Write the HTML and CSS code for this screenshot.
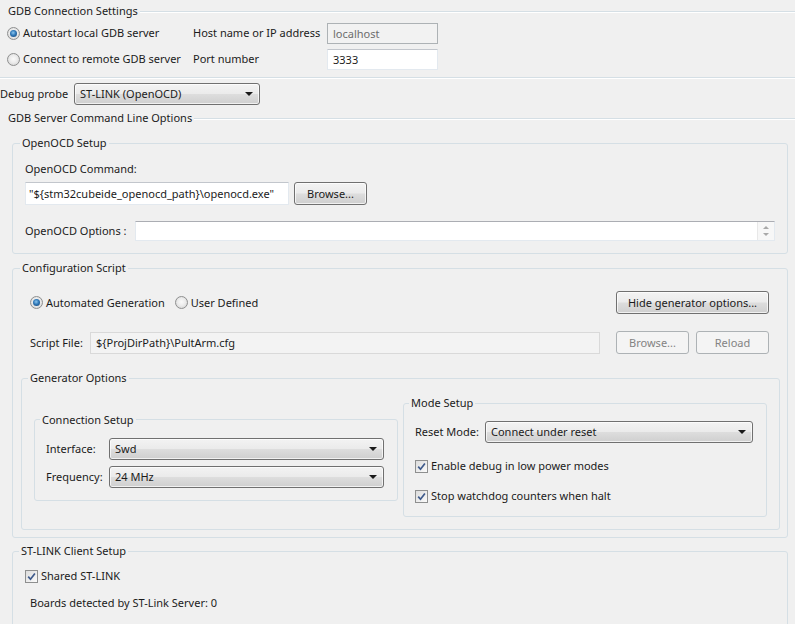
FILE: index.html
```html
<!DOCTYPE html>
<html lang="en">
<head>
    <meta charset="UTF-8">
    <title>Debugger</title>
    <link rel="stylesheet" href="styles.css">
</head>
<body>
    <div class="page">

        <!-- GDB connection -->
        <div class="section-head"><span>GDB Connection Settings</span></div>
        <div class="gdb-connection">
            <div class="conn-grid">
                <label class="opt"><span class="radio checked"></span>Autostart local GDB server</label>
                <span>Host name or IP address</span>
                <span class="field disabled">localhost</span>
                <label class="opt"><span class="radio"></span>Connect to remote GDB server</label>
                <span>Port number</span>
                <span class="field">3333</span>
            </div>
        </div>

        <div class="probe-row">
            <span class="probe-label">Debug probe</span>
            <span class="combo probe">ST-LINK (OpenOCD)</span>
        </div>

        <!-- GDB server options -->
        <div class="section-head server-head"><span>GDB Server Command Line Options</span></div>
        <div class="server-options">

            <fieldset class="group openocd">
                <legend>OpenOCD Setup</legend>
                <div>OpenOCD Command:</div>
                <div class="cmd-row">
                    <span class="field cmd">"${stm32cubeide_openocd_path}\openocd.exe"</span>
                    <span class="btn">Browse...</span>
                </div>
                <div class="opts-row">
                    <span class="opts-label">OpenOCD Options :</span>
                    <span class="field multi">
                        <span class="scroll"><i class="up"></i><i class="down"></i></span>
                    </span>
                </div>
            </fieldset>

            <fieldset class="group config">
                <legend>Configuration Script</legend>
                <div class="mode-row">
                    <label class="opt"><span class="radio checked"></span>Automated Generation</label>
                    <label class="opt second"><span class="radio"></span>User Defined</label>
                    <span class="btn hide-btn">Hide generator options...</span>
                </div>
                <div class="script-row">
                    <span class="script-label">Script File:</span>
                    <span class="field readonly script">${ProjDirPath}\PultArm.cfg</span>
                    <span class="btn disabled">Browse...</span>
                    <span class="btn disabled">Reload</span>
                </div>

                <fieldset class="group generator">
                    <legend>Generator Options</legend>
                    <div class="gen-row">
                        <fieldset class="group connection">
                            <legend>Connection Setup</legend>
                            <div class="setup-grid conn-cols">
                                <span>Interface:</span>
                                <span class="combo">Swd</span>
                                <span>Frequency:</span>
                                <span class="combo">24 MHz</span>
                            </div>
                        </fieldset>
                        <fieldset class="group mode">
                            <legend>Mode Setup</legend>
                            <div class="setup-grid mode-cols">
                                <span>Reset Mode:</span>
                                <span class="combo">Connect under reset</span>
                            </div>
                            <label class="check-row">
                                <span class="check"><svg viewBox="0 0 11 11" width="11" height="11"><path d="M2.2 5.6l2.3 2.6L8.9 2.4" fill="none" stroke="#3f5b8c" stroke-width="1.7"/></svg></span>
                                Enable debug in low power modes
                            </label>
                            <label class="check-row">
                                <span class="check"><svg viewBox="0 0 11 11" width="11" height="11"><path d="M2.2 5.6l2.3 2.6L8.9 2.4" fill="none" stroke="#3f5b8c" stroke-width="1.7"/></svg></span>
                                Stop watchdog counters when halt
                            </label>
                        </fieldset>
                    </div>
                </fieldset>
            </fieldset>

            <fieldset class="group stlink">
                <legend>ST-LINK Client Setup</legend>
                <label class="check-row first">
                    <span class="check"><svg viewBox="0 0 11 11" width="11" height="11"><path d="M2.2 5.6l2.3 2.6L8.9 2.4" fill="none" stroke="#3f5b8c" stroke-width="1.7"/></svg></span>
                    Shared ST-LINK
                </label>
                <div class="boards">Boards detected by ST-Link Server: 0</div>
            </fieldset>

        </div>
    </div>
</body>
</html>
```

FILE: styles.css
```css
body {
    margin: 0;
    background: #f0f0f0;
    font-family: "Noto Sans", "Segoe UI", Arial, sans-serif;
    font-size: 11px;
    line-height: 16px;
    color: #1b1b1b;
    overflow: hidden;
}

.page {
    width: 795px;
}

/* titles with a line running to the right */
.section-head {
    display: flex;
    align-items: center;
    height: 16px;
    margin-top: 3px;
    padding-left: 6px;
}

.section-head span {
    padding: 0 2px;
}

.section-head::after {
    content: "";
    flex: 1;
    margin-top: 2px;
    border-top: 1px solid #d5dfe5;
    border-bottom: 1px solid #fff;
}

.server-head {
    margin-top: 5px;
}

.gdb-connection {
    padding: 3px 0 7px 7px;
    border-bottom: 1px solid #d5dfe5;
    box-shadow: 0 1px 0 #fff;
}

.conn-grid {
    display: grid;
    grid-template-columns: 186px 134px 111px;
    grid-auto-rows: 22px;
    row-gap: 4px;
    align-items: center;
}

/* controls */
.opt {
    display: flex;
    align-items: center;
}

.radio {
    position: relative;
    flex: none;
    width: 13px;
    height: 13px;
    box-sizing: border-box;
    margin-right: 3px;
    border: 1px solid #8e8f8f;
    border-radius: 50%;
    background: radial-gradient(circle at 50% 45%, #fafafa 0, #ececec 45%, #cdcdcd 100%);
}

.radio.checked::after {
    content: "";
    position: absolute;
    left: 2px;
    top: 2px;
    width: 7px;
    height: 7px;
    border-radius: 50%;
    background: radial-gradient(circle at 45% 40%, #8cc6ee 0, #2f78b8 45%, #173f6a 100%);
}

.field {
    display: block;
    height: 21px;
    box-sizing: border-box;
    padding: 0 5px;
    line-height: 19px;
    background: #fff;
    border: 1px solid #e3e9ef;
    border-top-color: #c2c6cc;
    white-space: nowrap;
    overflow: hidden;
}

.field.disabled {
    background: #f2f2f2;
    border-color: #adb2b5;
    color: #6d6d6d;
}

.field.readonly {
    background: #f3f3f3;
    border-color: #d9d9d9;
}

.combo,
.btn {
    display: flex;
    align-items: center;
    box-sizing: border-box;
    height: 22px;
    padding: 0 5px;
    border: 1px solid #707070;
    border-radius: 3px;
    background: linear-gradient(#f3f3f3 0%, #ebebeb 48%, #dddddd 52%, #cfcfcf 100%);
    box-shadow: inset 0 0 0 1px rgba(255,255,255,0.7);
    white-space: nowrap;
}

.combo::after {
    content: "";
    margin-left: auto;
    margin-right: 1px;
    border-left: 4px solid transparent;
    border-right: 4px solid transparent;
    border-top: 4px solid #1a1a1a;
}

.btn {
    justify-content: center;
    height: 23px;
    width: 73px;
}

.btn.disabled {
    border-color: #adb2b5;
    background: #f4f4f4;
    box-shadow: none;
    color: #838383;
}

.check {
    display: flex;
    align-items: center;
    justify-content: center;
    flex: none;
    width: 13px;
    height: 13px;
    box-sizing: border-box;
    margin-right: 3px;
    border: 1px solid #8e8f8f;
    background: linear-gradient(135deg, #dcdcdc, #fbfbfb);
}

.check-row {
    display: flex;
    align-items: center;
    height: 16px;
}

/* debug probe */
.probe-row {
    display: flex;
    align-items: center;
    margin-top: 5px;
}

.probe-label {
    width: 74px;
}

.probe {
    width: 186px;
}

/* group boxes */
.server-options {
    padding: 9px 7px 0 12px;
}

.group {
    min-width: 0;
    margin: 0;
    padding: 0;
    border: 1px solid #d5dfe5;
    border-radius: 3px;
}

.group > legend {
    padding: 0 2px;
    margin-left: -6px;
    line-height: 16px;
}

.openocd {
    padding: 10px 12px 12px;
}

.openocd > legend {
    margin-left: -5px;
}

.cmd-row {
    display: flex;
    gap: 5px;
    margin-top: 5px;
}

.field.cmd {
    width: 264px;
    height: 23px;
    line-height: 21px;
    padding-left: 3px;
}

.opts-row {
    display: flex;
    align-items: center;
    margin-top: 16px;
}

.opts-label {
    width: 110px;
}

.field.multi {
    flex: 1;
    height: 20px;
    display: flex;
    justify-content: flex-end;
    padding: 0;
    border-top-color: #abadb3;
}

.scroll {
    display: flex;
    flex-direction: column;
    align-items: center;
    justify-content: center;
    gap: 4px;
    width: 16px;
    border-left: 1px solid #e8e8e8;
    background: #f7f7f7;
}

.scroll i {
    border-left: 3px solid transparent;
    border-right: 3px solid transparent;
}

.scroll .up {
    border-bottom: 3px solid #a8a8a8;
}

.scroll .down {
    border-top: 3px solid #a8a8a8;
}

.config {
    margin-top: 6px;
    padding: 15px 18px 7px 17px;
}

.config > legend {
    margin-left: -10px;
}

.mode-row {
    display: flex;
    align-items: center;
    height: 23px;
}

.second {
    margin-left: 10px;
}

.hide-btn {
    margin-left: auto;
    width: 153px;
}

.script-row {
    display: flex;
    align-items: center;
    gap: 7px;
    margin-top: 17px;
}

.script-label {
    width: 60px;
    margin-right: -7px;
}

.field.script {
    width: 510px;
    height: 22px;
    line-height: 20px;
    margin-right: 9px;
}

.generator {
    margin: 16px -11px 0 -9px;
    padding: 9px 12px 12px;
}

.gen-row {
    display: flex;
    align-items: center;
    gap: 5px;
}

.gen-row > .group {
    flex: 1;
    padding: 10px 13px 12px 11px;
}

.setup-grid {
    display: grid;
    grid-auto-rows: 22px;
    row-gap: 6px;
    align-items: center;
}

.conn-cols {
    grid-template-columns: 63px 1fr;
}

.mode-cols {
    grid-template-columns: 70px 1fr;
}

.mode .check-row {
    margin-top: 14px;
}

.mode .setup-grid + .check-row {
    margin-top: 15px;
}

.stlink {
    margin-top: 5px;
    padding: 9px 12px 20px;
}

.boards {
    margin-top: 11px;
    padding-left: 5px;
}
```
